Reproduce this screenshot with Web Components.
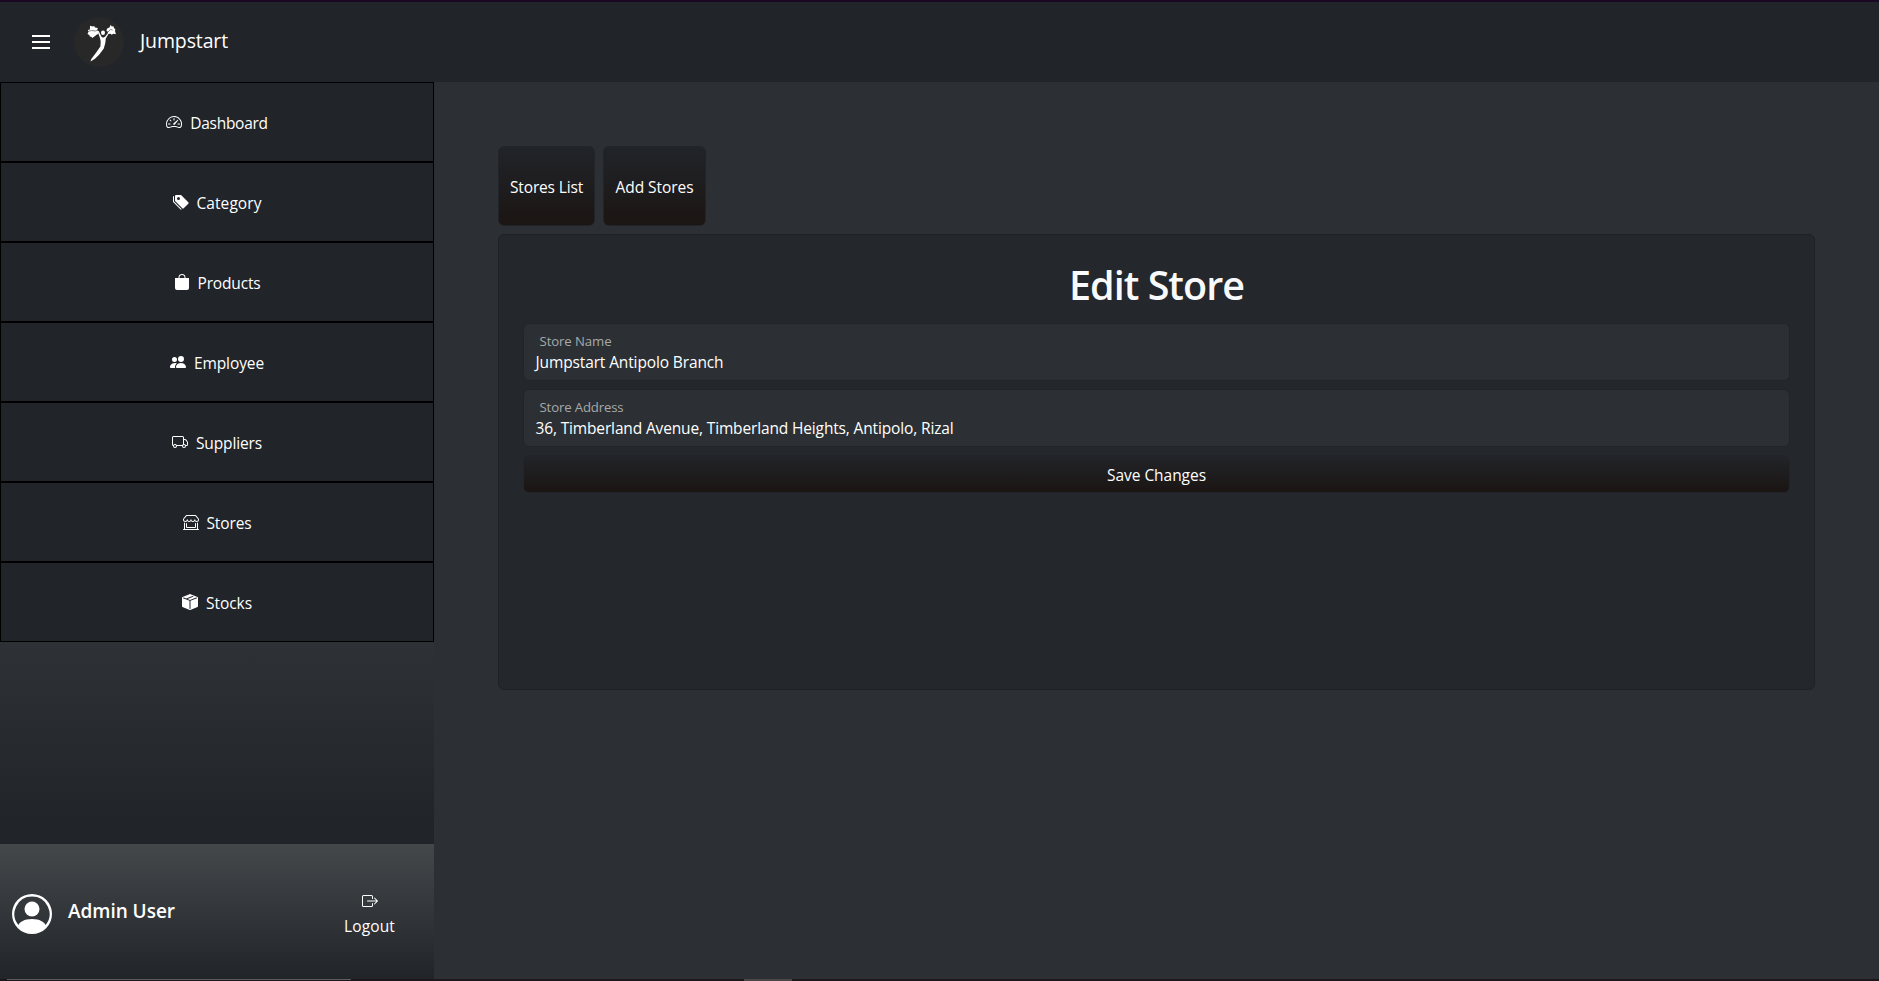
<!DOCTYPE html>
<html lang="en">
<head>
<meta charset="utf-8">
<title>Jumpstart</title>
<style>
html,body{margin:0;height:100%;background:#2c3034;overflow:hidden}
body{font:15.5px/24px "Open Sans","Noto Sans",sans-serif;color:#fff}
</style>
</head>
<body>
<app-shell></app-shell>
<script>
const ICONS = {
  dash: '<path d="M8 4a.5.5 0 0 1 .5.5V6a.5.5 0 0 1-1 0V4.500A.5.5 0 0 1 8 4zM3.732 5.732a.5.5 0 0 1 .707 0l.915.914a.5.5 0 1 1-.708.708l-.914-.915a.5.5 0 0 1 0-.707zM2 10a.5.5 0 0 1 .5-.5h1.586a.5.5 0 0 1 0 1H2.5A.5.5 0 0 1 2 10zm9.5 0a.5.5 0 0 1 .5-.5h1.500a.5.5 0 0 1 0 1H12a.5.5 0 0 1-.5-.5zm.754-4.246a.389.389 0 0 0-.527-.02L7.547 9.310a.91.91 0 1 0 1.302 1.258l3.434-4.297a.389.389 0 0 0-.029-.518z"/><path fill-rule="evenodd" d="M0 10a8 8 0 1 1 15.547 2.661c-.442 1.253-1.845 1.602-2.932 1.250C11.309 13.488 9.475 13 8 13c-1.474 0-3.310.488-4.615.911-1.087.352-2.490.003-2.932-1.250A7.988 7.988 0 0 1 0 10zm8-7a7 7 0 0 0-6.603 9.329c.203.575.923.876 1.680.630C4.397 12.533 6.358 12 8 12s3.604.532 4.923.960c.757.245 1.477-.056 1.680-.631A7 7 0 0 0 8 3z"/>',
  tags: '<path d="M2 2a1 1 0 0 1 1-1h4.586a1 1 0 0 1 .707.293l7 7a1 1 0 0 1 0 1.414l-4.586 4.586a1 1 0 0 1-1.414 0l-7-7A1 1 0 0 1 2 6.586V2zm3.500 4a1.500 1.500 0 1 0 0-3 1.500 1.500 0 0 0 0 3z"/><path d="M1.293 7.793A1 1 0 0 1 1 7.086V2a1 1 0 0 0-1 1v4.586a1 1 0 0 0 .293.707l7 7a1 1 0 0 0 1.414 0l.043-.043-7.457-7.457z"/>',
  bag: '<path d="M8 1a2.500 2.500 0 0 1 2.500 2.500V4h-5v-.5A2.500 2.500 0 0 1 8 1zm3.500 3v-.5a3.500 3.500 0 1 0-7 0V4H1v10a2 2 0 0 0 2 2h10a2 2 0 0 0 2-2V4h-3.500z"/>',
  people: '<path d="M7 14s-1 0-1-1 1-4 5-4 5 3 5 4-1 1-1 1H7zm4-6a3 3 0 1 0 0-6 3 3 0 0 0 0 6zm-5.784 6A2.238 2.238 0 0 1 5 13c0-1.355.68-2.750 1.936-3.720A6.325 6.325 0 0 0 5 9c-4 0-5 3-5 4s1 1 1 1h4.216zM4.500 8a2.500 2.500 0 1 0 0-5 2.500 2.500 0 0 0 0 5z"/>',
  truck: '<path d="M0 3.500A1.500 1.500 0 0 1 1.500 2h9A1.500 1.500 0 0 1 12 3.500V5h1.020a1.500 1.500 0 0 1 1.170.563l1.481 1.850a1.500 1.500 0 0 1 .329.938V10.500a1.500 1.500 0 0 1-1.500 1.500H14a2 2 0 1 1-4 0H5a2 2 0 1 1-3.998-.085A1.500 1.500 0 0 1 0 10.500v-7zm1.294 7.456A1.999 1.999 0 0 1 4.732 11h5.536a2.010 2.010 0 0 1 .732-.732V3.500a.5.5 0 0 0-.5-.5h-9a.5.5 0 0 0-.5.5v7a.5.5 0 0 0 .294.456zM12 10a2 2 0 0 1 1.732 1h.768a.5.5 0 0 0 .5-.5V8.350a.5.5 0 0 0-.110-.312l-1.480-1.850A.5.5 0 0 0 13.020 6H12v4zm-9 1a1 1 0 1 0 0 2 1 1 0 0 0 0-2zm9 0a1 1 0 1 0 0 2 1 1 0 0 0 0-2z"/>',
  shop: '<path d="M2.970 1.350A1 1 0 0 1 3.730 1h8.540a1 1 0 0 1 .760.350l2.609 3.044A1.500 1.500 0 0 1 16 5.370v.255a2.375 2.375 0 0 1-4.250 1.458A2.371 2.371 0 0 1 9.875 8 2.370 2.370 0 0 1 8 7.083 2.370 2.370 0 0 1 6.125 8a2.370 2.370 0 0 1-1.875-.917A2.375 2.375 0 0 1 0 5.625V5.370a1.500 1.500 0 0 1 .361-.976l2.610-3.045zm1.780 4.275a1.375 1.375 0 0 0 2.750 0 .5.5 0 0 1 1 0 1.375 1.375 0 0 0 2.750 0 .5.5 0 0 1 1 0 1.375 1.375 0 1 0 2.750 0V5.370a.5.5 0 0 0-.120-.325L12.270 2H3.730L1.120 5.045A.5.5 0 0 0 1 5.370v.255a1.375 1.375 0 0 0 2.750 0 .5.5 0 0 1 1 0zM1.500 8.500A.5.5 0 0 1 2 9v6h12V9a.5.5 0 0 1 1 0v6h.5a.5.5 0 0 1 0 1H.5a.5.5 0 0 1 0-1H1V9a.5.5 0 0 1 .5-.5zm2 .5a.5.5 0 0 1 .5.5V13h8V9.500a.5.5 0 0 1 1 0V13a1 1 0 0 1-1 1H4a1 1 0 0 1-1-1V9.500a.5.5 0 0 1 .5-.5z"/>',
  box: '<path fill-rule="evenodd" d="M15.528 2.973a.75.75 0 0 1 .472.696v8.662a.75.75 0 0 1-.472.696l-7.250 2.900a.75.75 0 0 1-.557 0l-7.250-2.900A.75.75 0 0 1 0 12.331V3.669a.75.75 0 0 1 .471-.696L7.443.184l.010-.003.268-.108a.75.75 0 0 1 .558 0l.269.108.010.003 6.970 2.789zM10.404 2 4.250 4.461 1.846 3.500 1 3.839v.400l6.500 2.600v7.922l.5.200.5-.200V6.840l6.500-2.600v-.400l-.846-.339L8 5.961 5.596 5l6.154-2.461L10.404 2z"/>',
  logout: '<path fill-rule="evenodd" d="M10 12.500a.5.5 0 0 1-.5.5h-8a.5.5 0 0 1-.5-.5v-9a.5.5 0 0 1 .5-.5h8a.5.5 0 0 1 .5.5v2a.5.5 0 0 0 1 0v-2A1.500 1.500 0 0 0 9.500 2h-8A1.500 1.500 0 0 0 0 3.500v9A1.500 1.500 0 0 0 1.500 14h8a1.500 1.500 0 0 0 1.500-1.500v-2a.5.5 0 0 0-1 0v2z"/><path fill-rule="evenodd" d="M15.854 8.354a.5.5 0 0 0 0-.708l-3-3a.5.5 0 0 0-.708.708L14.293 7.500H5.500a.5.5 0 0 0 0 1h8.793l-2.147 2.146a.5.5 0 0 0 .708.708l3-3z"/>',
  person: '<path d="M11 6a3 3 0 1 1-6 0 3 3 0 0 1 6 0z"/><path fill-rule="evenodd" d="M0 8a8 8 0 1 1 16 0A8 8 0 0 1 0 8zm8-7a7 7 0 0 0-5.468 11.370C3.242 11.226 4.805 10 8 10s4.757 1.225 5.468 2.370A7 7 0 0 0 8 1z"/>'
};
function define(name, html, ready) {
  customElements.define(name, class extends HTMLElement {
    connectedCallback() {
      if (this.shadowRoot) return;
      const root = this.attachShadow({mode: 'open'});
      root.innerHTML = typeof html === 'function' ? html(this) : html;
      if (ready) ready(this, root);
    }
  });
}
/* A single line of text tracked out to a given width in pixels. */
define('fit-text', '<style>:host{display:inline-block;white-space:nowrap}</style><slot></slot>', el => {
  const target = +el.getAttribute('w');
  const natural = el.getBoundingClientRect().width;
  el.style.letterSpacing = ((target - natural) / el.textContent.length).toFixed(3) + 'px';
});
define('ui-icon', el => `<style>:host{display:block;flex:none;width:var(--s,16px);height:var(--s,16px)}svg{display:block}</style>
<svg width="100%" height="100%" viewBox="0 0 16 16" fill="#fff">${ICONS[el.getAttribute('name')]}</svg>`);
define('nav-item', el => `<style>
:host{display:flex;box-sizing:border-box;height:80px;border:1px solid #000;background:#212429;align-items:center;justify-content:center;gap:8px}
fit-text{padding-top:2px}</style>
<ui-icon name="${el.getAttribute('icon')}"></ui-icon><fit-text w="${el.getAttribute('w')}">${el.getAttribute('label')}</fit-text>`);
define('top-bar', `<style>
:host{display:flex;box-sizing:border-box;height:82px;border-top:2px solid #1a0823;background:#212429;align-items:center}
.menu{margin:0 24px 0 32px;width:18px;height:14px;flex:none}
.logo{width:50px;height:50px;flex:none}
.name{font-size:19.500px;margin:-3px 0 0 16px}
svg{display:block}</style>
<svg class="menu" viewBox="0 0 18 14" stroke="#fff" stroke-width="2"><path d="M0 1h18M0 7h18M0 13h18"/></svg>
<svg class="logo" viewBox="0 0 50 50"><circle cx="25" cy="25" r="25" fill="#282828"/>
<g fill="#fff"><path d="m16 8.800 3 .8 1.200-.6.8 1.500 2.800.5-.6 2 .8 1 .2 3-1.700.7L21 19l-2.700 2-1-1.200-1.500-.3-.4-1.500-1.900-1 1-2.300-.6-1.700 2-.5z"/><path d="m36.700 7.800 1 1.700 1.800-.3.500 2 1.300.8-.3 2 .9 3.200-2.600-.5-1.600 1.100-1.200-1L34 17l-.2-2.300-1.500-1.500 1.200-2 2-.6z"/>
<ellipse cx="29" cy="15.800" rx="2" ry="2.200"/><path d="m23.500 13.500 1.300.8 2.500 5.200 1.700 1.300 2-1.100 3.200-4 .8.400-3.200 5.400-.5 4.500-1.500 5.500-4.500 6-4.300 4.200-4.500 2.800.8-2.500 4.700-6.200 4.400-6.300.3-5-.7-3.500-1.500-4z"/></g>
<path d="m14 14.500 3.500-1 4 .5 2.500-1m10 2 2.500-2.500 2.200.5" stroke="#555" stroke-width=".7" fill="none"/></svg>
<fit-text class="name" w="88">Jumpstart</fit-text>`);
define('user-panel', `<style>
:host{display:flex;box-sizing:border-box;height:135px;flex:none;background:linear-gradient(#44484b,#212529);align-items:center;padding:0 39px 0 12px}
.avatar{--s:40px;margin-top:4px}
.name{font-size:19px;font-weight:600;margin:-2px 0 0 16px}
.out{margin:7px 0 0 auto;display:flex;flex-direction:column;align-items:center;gap:5px}</style>
<ui-icon class="avatar" name="person"></ui-icon><fit-text class="name" w="107">Admin User</fit-text>
<div class="out"><ui-icon name="logout"></ui-icon><fit-text w="51">Logout</fit-text></div>`);
define('side-bar', `<style>
:host{display:flex;flex-direction:column;width:434px;flex:none;background:linear-gradient(#2e3135 560px,#212429 740px)}
nav{flex:1}</style>
<nav>
<nav-item icon="dash" label="Dashboard" w="77.5"></nav-item>
<nav-item icon="tags" label="Category" w="65"></nav-item>
<nav-item icon="bag" label="Products" w="63"></nav-item>
<nav-item icon="people" label="Employee" w="70"></nav-item>
<nav-item icon="truck" label="Suppliers" w="66"></nav-item>
<nav-item icon="shop" label="Stores" w="45"></nav-item>
<nav-item icon="box" label="Stocks" w="46"></nav-item>
</nav><user-panel></user-panel>`);
define('grad-button', `<style>
:host{display:flex;box-sizing:border-box;align-items:center;justify-content:center;border:1px solid #212429;border-radius:6px;background:linear-gradient(#212429,#1b1513)}
::slotted(fit-text){padding-top:2px}</style><slot></slot>`);
define('form-field', el => `<style>
:host{display:block;box-sizing:border-box;height:58px;border:1px solid #212529;border-radius:6px;background:#2c3034;padding:5px 11.500px}
.label{display:block;height:21px;line-height:24px;font-size:13.200px;color:#a6a9ab;padding-left:4px}
.value{display:block;line-height:24px}</style>
<div class="label"><fit-text w="${el.getAttribute('lw')}">${el.getAttribute('label')}</fit-text></div>
<div class="value"><fit-text w="${el.getAttribute('vw')}"><slot></slot></fit-text></div>`, (el, root) => {
  const value = root.querySelector('.value fit-text');
  value.style.letterSpacing = '0px';
  value.style.letterSpacing = ((+el.getAttribute('vw') - value.getBoundingClientRect().width) / el.textContent.length) + 'px';
});
define('store-form', `<style>
:host{display:flex;flex-direction:column;box-sizing:border-box;height:456px;border:1px solid #1e2125;border-radius:6px;background:#24272b;padding:26px 24px}
h1{margin:0 0 14px;height:48px;line-height:48px;font-size:39.500px;font-weight:600;text-align:center;color:#f8f9fa}
form-field{margin-bottom:8px}
grad-button{height:38px}</style>
<h1><fit-text w="175">Edit Store</fit-text></h1>
<form-field label="Store Name" lw="72" vw="188">Jumpstart Antipolo Branch</form-field>
<form-field label="Store Address" lw="84" vw="418">36, Timberland Avenue, Timberland Heights, Antipolo, Rizal</form-field>
<grad-button><fit-text w="99">Save Changes</fit-text></grad-button>`);
define('store-page', `<style>
:host{display:block;flex:1;padding:64px 64px 0}
.tabs{display:flex;gap:8px;margin-bottom:8px}
.tabs grad-button{height:80px;width:97px}
.tabs grad-button+grad-button{width:103px}</style>
<div class="tabs"><grad-button><fit-text w="73">Stores List</fit-text></grad-button><grad-button><fit-text w="78">Add Stores</fit-text></grad-button></div>
<store-form></store-form>`);
define('bottom-edge', `<style>
:host{display:flex;height:2px;background:#1d171b}
i{display:block;height:2px}
.a{margin-left:7px;width:344px;height:1px;background:#5c5a5c}
.b{margin-left:393px;width:48px;background:#4b4749}</style><i class="a"></i><i class="b"></i>`);
define('app-shell', `<style>
:host{display:flex;flex-direction:column;height:100vh}
main{display:flex;flex:1;min-height:0}</style>
<top-bar></top-bar><main><side-bar></side-bar><store-page></store-page></main><bottom-edge></bottom-edge>`);
</script>
</body>
</html>
